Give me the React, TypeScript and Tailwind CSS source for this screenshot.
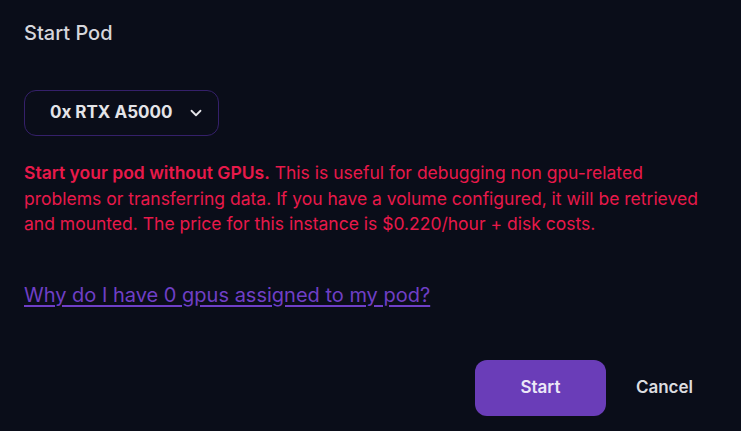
import { ChevronDown } from "lucide-react";

export default function App() {
  return (
    <div
      className="w-[741px] h-[431px] bg-[#0a0d19] px-6 pt-[19px] flex flex-col"
      style={{ fontFamily: "Inter, 'Noto Sans', sans-serif" }}
    >
      <h2 className="text-[20px] font-medium text-[#d6d6dc] leading-[28px]">Start Pod</h2>

      <div className="mt-[43px]">
        <button className="h-[46px] w-[195px] rounded-xl border border-[#35206a] flex items-center pl-[25px] gap-[15px] text-[#e4e4e8] text-[17px] font-bold">
          <span>0x RTX A5000</span>
          <ChevronDown className="w-[18px] h-[18px]" strokeWidth={2.4} />
        </button>
      </div>

      <p className="mt-[24px] text-[17.5px] leading-[25.5px] text-[#e8194a] w-[682px]">
        <span className="font-semibold">Start your pod without GPUs.</span> This is useful for debugging
        non gpu-related problems or transferring data. If you have a volume configured, it will be
        retrieved and mounted. The price for this instance is $0.220/hour + disk costs.
      </p>

      <a
        href="#"
        className="mt-[44px] text-[20px] leading-[28px] text-[#6f3fc6] underline underline-offset-[3px] self-start"
      >
        Why do I have 0 gpus assigned to my pod?
      </a>

      <div className="mt-auto mb-[15px] flex justify-end items-center gap-[30px] pr-[24px]">
        <button className="w-[131px] h-[56px] rounded-xl bg-[#6a3db8] text-[#ece8f7] text-[17px] font-semibold">
          Start
        </button>
        <button className="text-[17px] font-semibold text-[#dcdce0]">Cancel</button>
      </div>
    </div>
  );
}
